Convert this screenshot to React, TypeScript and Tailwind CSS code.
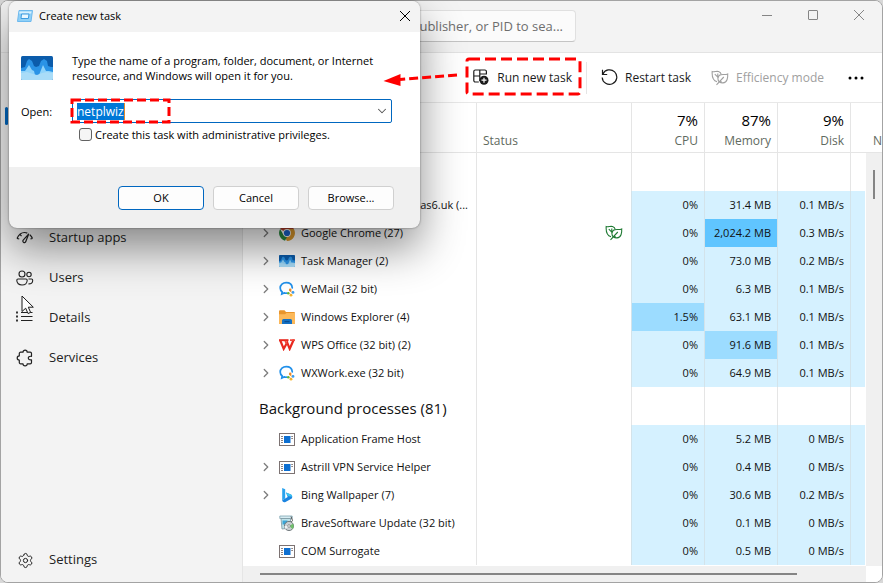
import { useState } from "react"
import { ChevronDown, ChevronRight, Settings } from "lucide-react"
import clsx from "clsx"

type IconName = "none" | "chrome" | "taskmgr" | "wecom" | "folder" | "wps" | "exe" | "bing" | "installer"

type Process = {
  name: string
  icon: IconName
  expandable?: boolean
  eco?: boolean
  cpu: string
  memory: string
  disk: string
  cpuHeat?: string
  memoryHeat?: string
}

const HEAT_LOW = "bg-[#d5f1ff]"
const HEAT_MID = "bg-[#9cdcff]"
const HEAT_HIGH = "bg-[#60c5ff]"

const apps: Process[] = [
  { name: "as6.uk (...", icon: "none", cpu: "0%", memory: "31.4 MB", disk: "0.1 MB/s" },
  { name: "Google Chrome (27)", icon: "chrome", expandable: true, eco: true, cpu: "0%", memory: "2,024.2 MB", disk: "0.3 MB/s", memoryHeat: HEAT_HIGH },
  { name: "Task Manager (2)", icon: "taskmgr", expandable: true, cpu: "0%", memory: "73.0 MB", disk: "0.2 MB/s" },
  { name: "WeMail (32 bit)", icon: "wecom", expandable: true, cpu: "0%", memory: "6.3 MB", disk: "0.1 MB/s" },
  { name: "Windows Explorer (4)", icon: "folder", expandable: true, cpu: "1.5%", memory: "63.1 MB", disk: "0.1 MB/s", cpuHeat: HEAT_MID },
  { name: "WPS Office (32 bit) (2)", icon: "wps", expandable: true, cpu: "0%", memory: "91.6 MB", disk: "0.1 MB/s", memoryHeat: HEAT_MID },
  { name: "WXWork.exe (32 bit)", icon: "wecom", expandable: true, cpu: "0%", memory: "64.9 MB", disk: "0.1 MB/s" },
]

const background: Process[] = [
  { name: "Application Frame Host", icon: "exe", cpu: "0%", memory: "5.2 MB", disk: "0 MB/s" },
  { name: "Astrill VPN Service Helper", icon: "exe", expandable: true, cpu: "0%", memory: "0.4 MB", disk: "0 MB/s" },
  { name: "Bing Wallpaper (7)", icon: "bing", expandable: true, cpu: "0%", memory: "30.6 MB", disk: "0.2 MB/s" },
  { name: "BraveSoftware Update (32 bit)", icon: "installer", cpu: "0%", memory: "0.1 MB", disk: "0 MB/s" },
  { name: "COM Surrogate", icon: "exe", cpu: "0%", memory: "0.5 MB", disk: "0 MB/s" },
]

/* ---------- icons ---------- */

function TaskManagerIcon({ className }: { className?: string }) {
  return (
    <svg viewBox="0 0 32 24" className={className} preserveAspectRatio="none">
      <rect width="32" height="24" rx="1.5" fill="#0b5cab" />
      <path d="M0 12l4-1 2-6 2-2 3 2 2 5 2 1 3-1 2-5 3-2 3 2 1 5 3 1h2v12H0z" fill="#2a93e6" />
      <path d="M0 15h4l4-6 3 5 2 1 1 4h4l4-10 3 6h3l4 1v6H0z" fill="#8fd3fa" />
      <path d="M0 17l6-1 6 2 4 1 5-2 5-1 6 1v5.500a1.500 1.500 0 0 1-1.500 1.500h-29A1.500 1.500 0 0 1 0 22.500z" fill="#a9dcf8" />
    </svg>
  )
}

function RunIcon() {
  return (
    <svg width="16" height="12" viewBox="0 0 16 12">
      <path d="M2 .5h13.500L14 11.500H.5z" fill="#8fd0f7" stroke="#6db9ee" />
      <path d="M2.500 1.500h12l-.3 2h-12z" fill="#d8f0fe" />
      <path d="M4.500 4h7.500l-.6 4.500H4z" fill="#e9f7ff" stroke="#3d9be0" />
    </svg>
  )
}

function LeafIcon({ className }: { className?: string }) {
  return (
    <svg width="18" height="16" viewBox="0 0 18 16" fill="none" stroke="currentColor" strokeWidth="1.100" className={className}>
      <path d="M6 11.800C2 10.500.8 7 1.200 1.500c2 .8 4-.6 6.300 0C9.200 2 10 3 10.200 4.300" />
      <path d="M8.300 11.800C6.500 10 6.300 6.800 8.500 5.200c2.200-1.600 5.300 0 8.200-1.300.3 4-.5 8.700-4.700 9-1.500.1-2.700-.3-3.700-1.100z" />
      <path d="M3.800 4.200l3.500 3.500M6.800 3.500v3M12.800 7L5.500 14.800M8.300 11.800h2.500" />
    </svg>
  )
}

function RunTaskIcon() {
  return (
    <svg width="17" height="17" viewBox="0 0 17 17" fill="none" stroke="#1b1b1b" strokeWidth="1.200">
      <path d="M13.400 5.500V2.500a1.500 1.500 0 0 0-1.500-1.500H2.300A1.500 1.500 0 0 0 .8 2.500v9A1.500 1.500 0 0 0 2.300 13h3.500M6.800 1v11M.8 7h6M6.800 5h6.500" />
      <circle cx="11" cy="11.200" r="4.500" fill="#1b1b1b" stroke="none" />
      <path d="M11 8.700v5M8.500 11.200h5" stroke="#fff" />
    </svg>
  )
}

function RestartIcon() {
  return (
    <svg width="17" height="17" viewBox="0 0 17 17" fill="none" stroke="#1b1b1b" strokeWidth="1.200">
      <path d="M1.800 5.200A7.300 7.300 0 1 1 1.200 8.500" />
      <path d="M1.500.8v4.700h4.700" />
    </svg>
  )
}

function GaugeIcon() {
  return (
    <svg width="18" height="16" viewBox="0 0 18 16" fill="none" stroke="#222" strokeWidth="1.200">
      <path d="M1 8.500C3 4 5.500 2.500 8.500 2.500c1.200 0 2 .2 2.800.6M13.800 4.800c1.200 1 2.200 2.200 2.700 3.700M1 8.500l2.200.3M16.500 8.500l-2 .3M4.200 4.600l1.300 1.600" />
      <path d="M12.800 3.800L9.800 11.500a1.500 1.500 0 1 1-2.600-1.300z" />
    </svg>
  )
}

function UsersIcon() {
  return (
    <svg width="18" height="16" viewBox="0 0 18 16" fill="none" stroke="#222" strokeWidth="1.100">
      <circle cx="6" cy="4" r="3" />
      <circle cx="13" cy="4.500" r="2.200" />
      <path d="M2 9h8a1.200 1.200 0 0 1 1.200 1.200c0 3-2 4.800-5.200 4.800S.8 13.200.8 10.200A1.200 1.200 0 0 1 2 9zM12.500 9h3a1.200 1.200 0 0 1 1.200 1.200c0 2.600-1.400 3.800-4.200 3.700" />
    </svg>
  )
}

function DetailsIcon() {
  return (
    <svg width="18" height="16" viewBox="0 0 18 16" fill="none" stroke="#222" strokeWidth="1.200">
      <path d="M5 2.500h11.500M5 6.500h11.500M5 10.500h11.500" />
      <path d="M1 1.500v2M1 5.500v2M1 9.500v2" strokeWidth="1.800" />
    </svg>
  )
}

function ServicesIcon() {
  return (
    <svg width="18" height="18" viewBox="0 0 18 18" fill="none" stroke="#222" strokeWidth="1.200" strokeLinejoin="round">
      <path d="M7 3.200a2.100 2.100 0 0 1 4.200 0h3A1.300 1.300 0 0 1 15.500 4.500v2.800c-2.500-.3-3.200.7-3.200 1.800s.9 2 3.200 1.700v2.700a1.300 1.300 0 0 1-1.300 1.300h-3a2.100 2.100 0 0 1-4.200 0H4.600a1.300 1.300 0 0 1-1.300-1.300v-2.400a2.100 2.100 0 0 1 0-4.200V4.500a1.300 1.300 0 0 1 1.300-1.300z" />
    </svg>
  )
}

function ProcessIcon({ name }: { name: IconName }) {
  switch (name) {
    case "chrome":
      return (
        <svg width="16" height="16" viewBox="0 0 16 16">
          <path d="M8 8L1.100 4A8 8 0 0 1 14.900 4z" fill="#c4442f" />
          <path d="M8 8l-3.500 2L8 16a8 8 0 0 0 6.900-12H8z" fill="#dd9a2c" />
          <path d="M1.100 4l3.400 6 3.500 2-2 3.700A8 8 0 0 1 1.100 4z" fill="#2a8a3f" />
          <circle cx="8" cy="8" r="3.900" fill="#fff" />
          <circle cx="8" cy="8" r="3.100" fill="#1a66d0" />
        </svg>
      )
    case "taskmgr":
      return <TaskManagerIcon className="h-3 w-4" />
    case "wecom":
      return (
        <svg width="16" height="16" viewBox="0 0 16 16" fill="none">
          <path d="M13.300 6.800C13 3.700 10.500 1.600 7.200 1.600S1.200 3.900 1.200 7c0 1.700.8 3 2 4l-.4 2 2.300-1.100c.8.300 1.600.4 2.500.3" stroke="#2190ea" strokeWidth="1.700" strokeLinecap="round" />
          <circle cx="11.200" cy="8.900" r="1.300" fill="#f08a24" />
          <circle cx="9.300" cy="12.300" r="1.300" fill="#5db63c" />
          <circle cx="14" cy="11.400" r="1.400" fill="#3b9cf0" />
          <circle cx="12" cy="14.200" r="1.400" fill="#f6b52c" />
          <path d="M10.800 10l2 1.200M10.500 12.600l1.400 1" stroke="#f0a040" />
        </svg>
      )
    case "folder":
      return (
        <svg width="16" height="14" viewBox="0 0 16 14">
          <path d="M0 1.200A1 1 0 0 1 1 .2h4.500L7 2h8a1 1 0 0 1 1 1v10.800H0z" fill="#e8952c" />
          <path d="M0 4.200h6L7.500 3H16v10a.8.8 0 0 1-.8.8H.8A.8.8 0 0 1 0 13z" fill="#fcb95a" />
          <path d="M3 14v-3.500A1.500 1.500 0 0 1 4.500 9h7a1.500 1.500 0 0 1 1.500 1.500V14z" fill="#1471c4" />
          <path d="M5.500 11.600h5" stroke="#0a4c91" strokeWidth="1.200" />
        </svg>
      )
    case "wps":
      return (
        <svg width="16" height="12" viewBox="0 0 16 12" fill="none">
          <path d="M0 1.200h9.500" stroke="#e8281e" strokeWidth="2" />
          <path d="M1.300 1.500l3.400 8.300L8.200 3.500l2.500 6.300L14.800.5" stroke="#e8281e" strokeWidth="2.200" />
          <path d="M6.200 2l1.600 3M11 1.200h5" stroke="#f2483c" strokeWidth="1.800" />
        </svg>
      )
    case "exe":
      return (
        <svg width="16" height="13" viewBox="0 0 16 13">
          <rect x=".5" y=".5" width="15" height="12" fill="#fff" stroke="#7c7272" />
          <path d="M2 3.500h2M2 5.500h2M2 7.500h2M2 9.500h2M12.200 5.500h1.800M12.200 3.500h1.800" stroke="#8c8484" />
          <rect x="5" y="3" width="6.500" height="7" fill="#0d6fd1" />
        </svg>
      )
    case "bing":
      return (
        <svg width="16" height="16" viewBox="0 0 16 16">
          <path d="M3.200 1l3 1.200v9.300L3.200 13.300z" fill="#2aa3ee" />
          <path d="M7 5.500l5 2.100c1.300.6 1.600 2.800.8 4L6.500 15c-2 .7-3.300-.5-3.300-1.700l5.500-3.300z" fill="#1b84e0" />
          <path d="M7 5.500l5 2.100c.9.400 1.200 1.300 1.200 2.200L8.700 9z" fill="#3cc3f0" />
        </svg>
      )
    case "installer":
      return (
        <svg width="16" height="16" viewBox="0 0 16 16">
          <path d="M.8 1h12.400v2.500H.8z" fill="#d7ecf2" stroke="#7fa6b3" strokeWidth=".8" />
          <path d="M2 3.500h9.500V13l-8.500 1z" fill="#bfe3ea" stroke="#7b96a0" strokeWidth=".8" />
          <path d="M3.500 5.500h5v4h-5z" fill="#3aa6d8" />
          <path d="M12 1.500l1.500 4-3 4" fill="none" stroke="#555" />
          <circle cx="10" cy="11" r="4.600" fill="#c9cfd2" stroke="#5c6468" strokeWidth=".8" />
          <path d="M10 11l4-2.300A4.600 4.600 0 0 1 13.500 14z" fill="#6fc06a" />
          <path d="M10 11l-3.500 3a4.600 4.600 0 0 1-1-3z" fill="#eef2f4" />
          <circle cx="10" cy="11" r="1.300" fill="#fff" stroke="#5c6468" strokeWidth=".6" />
        </svg>
      )
    default:
      return null
  }
}

function CloseIcon() {
  return (
    <svg width="12" height="12" viewBox="0 0 12 12" stroke="currentColor">
      <path d="M1 1l10 10M11 1L1 11" />
    </svg>
  )
}

/* ---------- window chrome ---------- */

function TitleBar() {
  const [query, setQuery] = useState("")
  return (
    <header className="flex h-[52px] shrink-0 items-start border-b border-[#e3e3e3] bg-[#f3f3f3]">
      <div className="ml-[260px] flex w-[315px] shrink-0 pt-[9px]">
        <input
          type="text"
          aria-label="Search"
          value={query}
          onChange={(e) => setQuery(e.target.value)}
          placeholder="publisher, or PID to sea..."
          className="h-8 w-full rounded border border-[#e0e0e0] border-b-[#c4c4c4] bg-[#fbfbfb] px-3 text-right text-[13px] text-[#333] outline-none placeholder:text-[#6e6e6e]"
        />
      </div>
      <div className="ml-auto flex gap-1 pr-[2px] text-[#858585]">
        <button aria-label="Minimize" className="flex h-7 w-[42px] items-center justify-center">
          <svg width="12" height="12" viewBox="0 0 12 12" stroke="currentColor"><path d="M1 6.500h10" /></svg>
        </button>
        <button aria-label="Maximize" className="flex h-7 w-[42px] items-center justify-center">
          <svg width="12" height="12" viewBox="0 0 12 12" fill="none" stroke="currentColor"><rect x="1.500" y="1.500" width="9" height="9" rx=".5" /></svg>
        </button>
        <button aria-label="Close window" className="flex h-7 w-[42px] items-center justify-center">
          <CloseIcon />
        </button>
      </div>
    </header>
  )
}

function NavItem({ label, icon }: { label: string; icon: React.ReactNode }) {
  return (
    <a href="#" className="flex h-10 items-center gap-[15px] pl-[15px] text-[13px] text-[#222]">
      <span className="flex w-[18px] justify-center">{icon}</span>
      {label}
    </a>
  )
}

function Sidebar() {
  return (
    <nav className="flex w-[242px] shrink-0 flex-col border-r border-[#e5e5e5] bg-[#f3f3f3]">
      {/* selected page marker */}
      <div className="flex h-[165px] pt-[54px] pl-1">
        <span className="h-[18px] w-[3px] rounded-full bg-[#0067c0]" />
      </div>
      <NavItem label="Startup apps" icon={<GaugeIcon />} />
      <NavItem label="Users" icon={<UsersIcon />} />
      <NavItem label="Details" icon={<DetailsIcon />} />
      <NavItem label="Services" icon={<ServicesIcon />} />
      <div className="mt-auto pb-[2px]">
        <NavItem label="Settings" icon={<Settings size={17} strokeWidth={1.4} />} />
      </div>
    </nav>
  )
}

function Toolbar() {
  return (
    <div className="flex h-[50px] shrink-0 items-center justify-end border-b border-[#e8e8e8] bg-white pr-[10px] text-[12px] text-[#1b1b1b]">
      <button className="relative flex h-10 items-center gap-[7px] px-2">
        <RunTaskIcon />
        Run new task
        <svg className="absolute inset-0 h-full w-full overflow-visible" fill="none">
          <rect x="2" y="1" width="113" height="35" rx="2" stroke="#fe0000" strokeWidth="3" strokeDasharray="11 5" />
        </svg>
      </button>
      <span className="mx-[6px] h-8 w-px bg-[#e5e5e5]" />
      <button className="flex h-10 items-center gap-[7px] px-2">
        <RestartIcon />
        Restart task
      </button>
      <button disabled className="ml-1 flex h-10 items-center gap-[7px] px-2 text-[#a0a0a0]">
        <LeafIcon />
        Efficiency mode
      </button>
      <button aria-label="More options" className="ml-2 flex h-10 w-8 items-center justify-center">
        <svg width="16" height="4" viewBox="0 0 16 4"><circle cx="2" cy="2" r="1.500" /><circle cx="8" cy="2" r="1.500" /><circle cx="14" cy="2" r="1.500" /></svg>
      </button>
    </div>
  )
}

/* ---------- process table ---------- */

function ProcessRow({ process }: { process: Process }) {
  const cell = "border-l border-[#d3e3ea] pr-[6px] text-right whitespace-nowrap"
  return (
    <tr className="h-7">
      <td className="p-0">
        <div className={clsx("flex items-center whitespace-nowrap", process.icon === "none" ? "justify-end pr-2" : "pl-4")}>
          {process.icon !== "none" && (
            <>
              <span className="flex w-5 items-center">
                {process.expandable && (
                  <button aria-label={"Expand " + process.name} className="text-[#7d7d7d]">
                    <ChevronRight size={14} strokeWidth={2.2} />
                  </button>
                )}
              </span>
              <span className="mr-[6px] flex w-4 justify-center"><ProcessIcon name={process.icon} /></span>
            </>
          )}
          {process.name}
        </div>
      </td>
      <td className="border-l border-[#e5e5e5] p-0">
        {process.eco && <LeafIcon className="mr-2 ml-auto text-[#1f7a33]" />}
      </td>
      <td className={clsx(cell, process.cpuHeat ?? HEAT_LOW)}>{process.cpu}</td>
      <td className={clsx(cell, process.memoryHeat ?? HEAT_LOW)}>{process.memory}</td>
      <td className={clsx(cell, HEAT_LOW)}>{process.disk}</td>
      <td className={clsx(cell, HEAT_LOW)} />
    </tr>
  )
}

function GroupRow({ label }: { label?: string }) {
  return (
    <tr className="h-[38px]">
      <td className="p-0 pt-1 pl-4 text-[15px] whitespace-nowrap">{label}</td>
      <td className="border-l border-[#e5e5e5]" />
      <td className="border-l border-[#e5e5e5]" />
      <td className="border-l border-[#e5e5e5]" />
      <td className="border-l border-[#e5e5e5]" />
      <td className="border-l border-[#e5e5e5]" />
    </tr>
  )
}

function UsageHeader({ usage, label }: { usage: string; label: string }) {
  return (
    <th className="border-b border-l border-[#e5e5e5] p-0 pr-[6px] text-right align-top font-normal">
      <div className="pt-[6px] text-[15px] leading-[22px] text-black">{usage}</div>
      <div className="leading-5 text-[#5f6a60]">{label}</div>
    </th>
  )
}

function ProcessTable() {
  return (
    <div className="relative min-h-0 flex-1 overflow-hidden">
      <table className="w-full table-fixed border-separate border-spacing-0 text-[11px] leading-4 text-[#111]">
        <colgroup>
          <col />
          <col className="w-[155px]" />
          <col className="w-[73px]" />
          <col className="w-[73px]" />
          <col className="w-[73px]" />
          <col className="w-8" />
        </colgroup>
        <thead className="text-[12px]">
          <tr className="h-[50px]">
            <th aria-label="Name" className="border-b border-[#e5e5e5]" />
            <th className="border-b border-l border-[#e5e5e5] p-0 pb-[3px] pl-[6px] text-left align-bottom leading-4 font-normal text-[#5f6a60]">Status</th>
            <UsageHeader usage="7%" label="CPU" />
            <UsageHeader usage="87%" label="Memory" />
            <UsageHeader usage="9%" label="Disk" />
            <th className="overflow-hidden border-b border-l border-[#e5e5e5] p-0 pb-[3px] text-right align-bottom font-normal text-[#5f6a60]">N</th>
          </tr>
        </thead>
        <tbody>
          <GroupRow />
          {apps.map((p) => <ProcessRow key={p.name} process={p} />)}
          <GroupRow label="Background processes (81)" />
          {background.map((p) => <ProcessRow key={p.name} process={p} />)}
        </tbody>
      </table>
      <div className="absolute top-[50px] right-0 bottom-0 w-[17px] border-l border-white bg-[#f0f0f0] pt-[17px]">
        <div className="ml-[7px] h-[29px] w-[2px] bg-[#858585]" />
      </div>
    </div>
  )
}

/* ---------- "Create new task" dialog ---------- */

function DialogButton({ children, primary }: { children: React.ReactNode; primary?: boolean }) {
  return (
    <button
      className={clsx(
        "h-6 w-[86px] rounded border bg-[#fdfdfd] text-black",
        primary ? "border-[#0067c0]" : "border-[#d0d0d0]"
      )}
    >
      {children}
    </button>
  )
}

function CreateTaskDialog() {
  const [command, setCommand] = useState("netplwiz")
  const [admin, setAdmin] = useState(false)

  return (
    <div
      role="dialog"
      aria-label="Create new task"
      className="absolute top-px left-[9px] w-[411px] rounded-lg bg-[#f0f0f0] text-[11px] leading-[15px] text-black shadow-[0_0_2px_rgba(0,0,0,0.5),0_20px_44px_rgba(0,0,0,0.45)]"
    >
      <div className="flex h-[31px] items-center rounded-t-lg bg-[#f3f3f3] pr-[9px] pb-[2px] pl-2">
        <RunIcon />
        <span className="ml-[6px]">Create new task</span>
        <button aria-label="Close" className="ml-auto"><CloseIcon /></button>
      </div>

      <div className="h-[135px] bg-white pt-[21px] pr-7 pl-3">
        <div className="flex gap-[19px]">
          <TaskManagerIcon className="mt-[3px] h-6 w-8 shrink-0" />
          <p className="whitespace-nowrap">
            Type the name of a program, folder, document, or Internet<br />
            resource, and Windows will open it for you.
          </p>
        </div>
        <div className="mt-4 flex items-center">
          <label htmlFor="command" className="w-[51px]">Open:</label>
          <div className="relative flex h-6 flex-1 items-center rounded-xs border border-[#0067c0] bg-white pr-[2px] pl-1">
            <input
              id="command"
              type="text"
              value={command}
              onChange={(e) => setCommand(e.target.value)}
              className="field-sizing-content h-[17px] border-r border-[#e08a2c] bg-[#0078d7] text-[12px] text-white outline-none"
            />
            <button aria-label="Show history" className="ml-auto text-[#555]"><ChevronDown size={14} strokeWidth={1.8} /></button>
            <svg className="pointer-events-none absolute inset-0 h-full w-full overflow-visible" fill="none">
              <rect x="-1" y="0" width="97" height="22" stroke="#fe0000" strokeWidth="3" strokeDasharray="9 4" />
            </svg>
          </div>
        </div>
        <div className="mt-1 flex items-center gap-[3px] pl-[58px]">
          <input
            id="admin"
            type="checkbox"
            checked={admin}
            onChange={(e) => setAdmin(e.target.checked)}
            className="size-[13px] appearance-none rounded-[3px] border border-[#626262] bg-[#f5f5f5] checked:bg-[#0067c0]"
          />
          <label htmlFor="admin" className="whitespace-nowrap">Create this task with administrative privileges.</label>
        </div>
      </div>

      <div className="flex h-[61px] items-center justify-end gap-[9px] pr-[26px]">
        <DialogButton primary>OK</DialogButton>
        <DialogButton>Cancel</DialogButton>
        <DialogButton>Browse...</DialogButton>
      </div>
    </div>
  )
}

export default function App() {
  return (
    <div className="relative h-screen overflow-hidden bg-[#d8d8d8] font-['Open_Sans','Noto_Sans',sans-serif]">
      <div className="flex h-full flex-col overflow-hidden rounded-lg border border-[#a3a3a3] bg-white">
        <TitleBar />
        <div className="flex min-h-0 flex-1">
          <Sidebar />
          <main className="flex min-w-0 flex-1 flex-col">
            <Toolbar />
            <ProcessTable />
            <div className="flex h-4 shrink-0">
              <div className="flex flex-1 items-center bg-[#f0f0f0] pr-[69px] pl-[17px]">
                <div className="h-[2px] w-full bg-[#858585]" />
              </div>
              <div className="w-4 bg-white" />
            </div>
          </main>
        </div>
      </div>

      <CreateTaskDialog />

      {/* arrow from the toolbar button to the dialog */}
      <svg className="pointer-events-none absolute top-[70px] left-[380px]" width="80" height="20" viewBox="0 0 80 20" fill="none">
        <path d="M77 5L20 9.500" stroke="#fe0000" strokeWidth="3" strokeDasharray="9 4" />
        <path d="M3.500 11L20.500 4v12z" fill="#fe0000" />
      </svg>

      {/* mouse pointer */}
      <svg className="pointer-events-none absolute top-[295px] left-[21px]" width="14" height="20" viewBox="0 0 14 20">
        <path d="M1 1v15.500l3.700-3.300 2.300 5.300 2.600-1.100-2.300-5.200h5z" fill="#fff" stroke="#1b1b1b" strokeLinejoin="round" />
      </svg>
    </div>
  )
}
